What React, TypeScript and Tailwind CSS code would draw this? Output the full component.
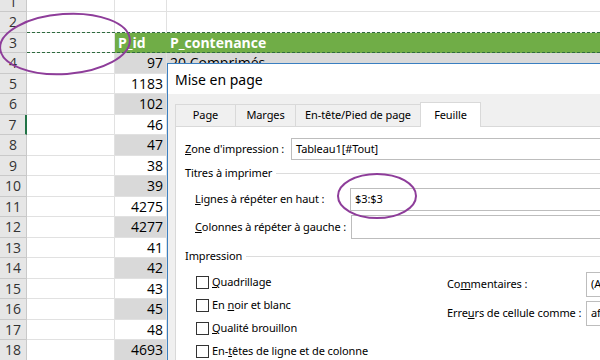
import React from 'react';

const values: Record<number, string> = {
  4: '97',
  5: '1183',
  6: '102',
  7: '46',
  8: '47',
  9: '38',
  10: '39',
  11: '4275',
  12: '4277',
  13: '41',
  14: '42',
  15: '43',
  16: '45',
  17: '48',
  18: '4693',
};

const rowNumbers = Array.from({ length: 18 }, (_, i) => i + 1);

function SheetRow({ n }: { n: number }) {
  const band = n >= 4 && n % 2 === 0;
  const header = n === 3;

  let headCls =
    'w-[27px] shrink-0 flex items-center justify-center border-r border-b border-[#c9c9c9] bg-[#e6e6e6] text-[#333]';
  if (n === 4) headCls += ' bg-[#a7d7ba] text-[#1d4f33]';
  if (n === 7) headCls += ' border-r-2 border-r-[#217346]';

  return (
    <div className="flex h-[20.5px] text-[14px]">
      <div className={headCls}>{n}</div>
      <div className="relative flex flex-1">
        <div className="w-[88px] shrink-0 border-r border-b border-[#e1e1e1]" />
        <div
          className={
            'w-[52px] shrink-0 flex items-center justify-end pr-[3px] border-r border-b ' +
            (header
              ? 'bg-[#70ad47] border-[#70ad47] justify-start pl-[3px] font-bold text-white'
              : band
                ? 'bg-[#d9d9d9] border-[#e1e1e1]'
                : 'border-[#e1e1e1]')
          }
        >
          {header ? 'P_id' : values[n]}
        </div>
        <div
          className={
            'flex-1 flex items-center pl-[3px] border-b ' +
            (header
              ? 'bg-[#70ad47] border-[#70ad47] font-bold text-white'
              : band
                ? 'bg-[#d9d9d9] border-[#e1e1e1]'
                : 'border-[#e1e1e1]')
          }
        >
          {header ? 'P_contenance' : n === 4 ? '20 Comprimés' : ''}
        </div>
        {header && (
          <span className="absolute inset-0 -top-px border-y border-dashed border-[#2f6b3f]" />
        )}
      </div>
    </div>
  );
}

function Field({ value, h }: { value: string; h: string }) {
  return (
    <div
      className={`flex-1 min-w-0 flex items-center pl-[4px] bg-white border border-[#bdbdbd] whitespace-nowrap overflow-hidden ${h}`}
    >
      {value}
    </div>
  );
}

function Check({ children }: { children: React.ReactNode }) {
  return (
    <div className="flex items-center h-[23px]">
      <span className="w-[13px] h-[13px] border border-[#333] bg-white mr-[3px]" />
      <span>{children}</span>
    </div>
  );
}

function PageSetup() {
  const tabs = [
    { label: 'Page', w: 'w-[60px]' },
    { label: 'Marges', w: 'w-[60px]' },
    { label: 'En-tête/Pied de page', w: 'w-[125px]' },
  ];

  return (
    <div className="absolute left-[167px] top-[63px] w-[460px] h-[310px] flex flex-col border-l border-t border-[#3a7fc1] font-['Noto_Sans',sans-serif] text-[11px] tracking-[-0.1px] text-black whitespace-nowrap">
      <div className="h-[30px] shrink-0 flex items-center pl-[7px] bg-white text-[14px] tracking-normal">
        Mise en page
      </div>
      <div className="flex-1 flex flex-col bg-[#f0f0f0] pl-[7px] pt-[8px]">
        <div className="flex h-[24px] items-end">
          {tabs.map((t) => (
            <div
              key={t.label}
              className={`${t.w} h-[22px] flex items-center justify-center border-t border-l border-[#d9d9d9]`}
            >
              {t.label}
            </div>
          ))}
          <div className="w-[61px] h-[25px] -mb-px z-10 flex items-center justify-center bg-white border-x border-t border-[#d9d9d9]">
            Feuille
          </div>
        </div>

        <div className="flex-1 flex flex-col bg-white border border-[#d9d9d9] pl-[9px]">
          <div className="flex items-center mt-[11px] h-[22px]">
            <span className="w-[106px] shrink-0">
              <u>Z</u>one d'impression :
            </span>
            <Field value="Tableau1[#Tout]" h="h-[22px]" />
          </div>

          <div className="flex items-center mt-[5px] h-[16px]">
            <span>Titres à imprimer</span>
            <span className="flex-1 h-px bg-[#dcdcdc] ml-[4px]" />
          </div>

          <div className="flex items-center mt-[7px] pl-[10px] h-[23px]">
            <span className="w-[155px] shrink-0">
              <u>L</u>ignes à répéter en haut :
            </span>
            <Field value="$3:$3" h="h-[23px]" />
          </div>

          <div className="flex items-center mt-[4px] pl-[10px] h-[24px]">
            <span className="w-[156px] shrink-0">
              <u>C</u>olonnes à répéter à gauche :
            </span>
            <Field value="" h="h-[24px]" />
          </div>

          <div className="flex items-center mt-[9px] h-[16px]">
            <span>Impression</span>
            <span className="flex-1 h-px bg-[#dcdcdc] ml-[4px]" />
          </div>

          <div className="flex mt-[7px]">
            <div className="w-[262px] shrink-0 pl-[11px] flex flex-col">
              <Check>
                <u>Q</u>uadrillage
              </Check>
              <Check>
                En <u>n</u>oir et blanc
              </Check>
              <Check>
                <u>Q</u>ualité brouillon
              </Check>
              <Check>
                En-<u>t</u>êtes de ligne et de colonne
              </Check>
            </div>
            <div className="flex-1 flex flex-col">
              <div className="flex items-center mt-[1px] h-[25px]">
                <span className="w-[139px] shrink-0">
                  Co<u>m</u>mentaires :
                </span>
                <Field value="(Aucun)" h="h-[25px]" />
              </div>
              <div className="flex items-center mt-[4px] h-[25px]">
                <span className="w-[139px] shrink-0">
                  Erre<u>u</u>rs de cellule comme :
                </span>
                <Field value="affiché" h="h-[25px]" />
              </div>
            </div>
          </div>
        </div>
      </div>
    </div>
  );
}

export default function App() {
  return (
    <div className="relative w-[600px] h-[360px] overflow-hidden bg-white font-['Open_Sans',sans-serif]">
      <div className="-mt-[8.5px] flex flex-col">
        {rowNumbers.map((n) => (
          <SheetRow key={n} n={n} />
        ))}
      </div>

      <PageSetup />

      <svg
        className="absolute inset-0 pointer-events-none"
        width="600"
        height="360"
        viewBox="0 0 600 360"
      >
        <ellipse
          cx="65"
          cy="44"
          rx="65"
          ry="30"
          transform="rotate(-4 65 44)"
          fill="none"
          stroke="#8e3d9a"
          strokeWidth="2"
        />
        <ellipse cx="377" cy="196" rx="39" ry="22" fill="none" stroke="#8e3d9a" strokeWidth="2" />
      </svg>
    </div>
  );
}
